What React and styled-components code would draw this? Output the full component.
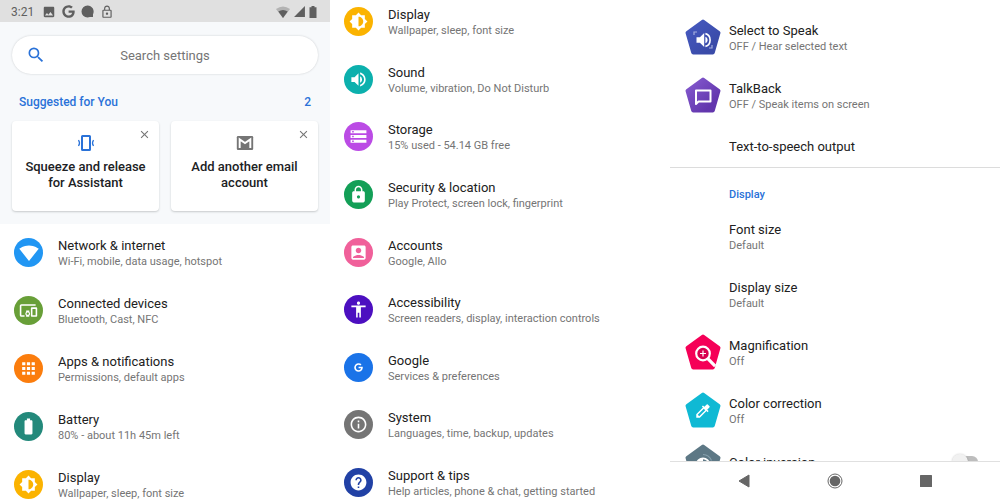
import React, { useId } from "react";
import styled, { createGlobalStyle } from "styled-components";
import {
  MdAccessibility,
  MdAccountBox,
  MdApps,
  MdBatteryFull,
  MdBrightnessMedium,
  MdClose,
  MdColorize,
  MdDevicesOther,
  MdHelp,
  MdImage,
  MdLock,
  MdOutlineInfo,
  MdOutlineLock,
  MdSearch,
  MdSignalCellular4Bar,
  MdSignalWifi4Bar,
  MdStorage,
  MdVolumeUp,
} from "react-icons/md";
import { FaGoogle } from "react-icons/fa";

const mainItems = [
  { title: "Network & internet", note: "Wi-Fi, mobile, data usage, hotspot", color: "#2196f3", icon: <MdSignalWifi4Bar size={20} /> },
  { title: "Connected devices", note: "Bluetooth, Cast, NFC", color: "#689f38", icon: <MdDevicesOther size={19} /> },
  { title: "Apps & notifications", note: "Permissions, default apps", color: "#fb7d0d", icon: <MdApps size={19} /> },
  { title: "Battery", note: "80% - about 11h 45m left", color: "#23897b", icon: <MdBatteryFull size={19} /> },
  { title: "Display", note: "Wallpaper, sleep, font size", color: "#fbb300", icon: <MdBrightnessMedium size={19} /> },
];

const moreItems = [
  mainItems[4],
  { title: "Sound", note: "Volume, vibration, Do Not Disturb", color: "#0cb0ad", icon: <MdVolumeUp size={19} /> },
  { title: "Storage", note: "15% used - 54.14 GB free", color: "#bb4be5", icon: <MdStorage size={19} /> },
  { title: "Security & location", note: "Play Protect, screen lock, fingerprint", color: "#139f57", icon: <MdLock size={19} /> },
  { title: "Accounts", note: "Google, Allo", color: "#f0609a", icon: <MdAccountBox size={19} /> },
  { title: "Accessibility", note: "Screen readers, display, interaction controls", color: "#4c0fc0", icon: <MdAccessibility size={19} /> },
  { title: "Google", note: "Services & preferences", color: "#1a73e8", icon: <FaGoogle size={9} /> },
  { title: "System", note: "Languages, time, backup, updates", color: "#757575", icon: <MdOutlineInfo size={19} /> },
  { title: "Support & tips", note: "Help articles, phone & chat, getting started", color: "#2141a5", icon: <MdHelp size={19} /> },
];

function Pentagon({ color, light = color, children }) {
  const id = useId();

  return (
    <svg width="36" height="36" viewBox="0 0 36 36" fill="none" aria-hidden="true">
      <linearGradient id={id} gradientUnits="userSpaceOnUse" x1="4" y1="6" x2="26" y2="28">
        <stop stopColor={light} />
        <stop offset="1" stopColor={color} />
      </linearGradient>
      <path
        d="M18 2.5 33.5 13.8 27.8 33.5H8.2L2.5 13.8z"
        fill={`url(#${id})`}
        stroke={`url(#${id})`}
        strokeWidth="4"
        strokeLinejoin="round"
      />
      {children}
    </svg>
  );
}

const SpeakIcon = () => (
  <Pentagon color="#3a4ba9" light="#4558be">
    <path d="M9 16v-3h3M27 26v3h-3" stroke="#a5aede" strokeWidth="1.2" />
    <path d="M11.5 18.3v5.4h3.4l4.3 4.3V14l-4.3 4.3z" fill="#fff" />
    <path d="M20.4 17.8c1.4.6 2.2 1.8 2.2 3.2s-.8 2.6-2.2 3.2z" fill="#fff" />
    <path d="M20.4 14.6c2.8.7 4.7 3.3 4.7 6.4s-1.9 5.7-4.7 6.4" stroke="#fff" strokeWidth="1.6" />
  </Pentagon>
);

const TalkBackIcon = () => (
  <Pentagon color="#6236ad" light="#8257cc">
    <path d="M11 13.5h14.5v11h-12L11 27z" stroke="#fff" strokeWidth="2" strokeLinejoin="round" />
  </Pentagon>
);

const MagnifyIcon = () => (
  <Pentagon color="#f50057">
    <circle cx="18" cy="19.5" r="6.8" fill="#d8004e" stroke="#fff" strokeWidth="2.2" />
    <path d="m22.8 24.6 7.4 7.6" stroke="#fff" strokeWidth="3.2" />
    <path d="M18 16.5v6M15 19.5h6" stroke="#fff" strokeWidth="1.2" />
  </Pentagon>
);

const CorrectionIcon = () => (
  <Pentagon color="#0fb9d4">
    <MdColorize x="9" y="10" size={18} color="#fff" />
  </Pentagon>
);

const InversionIcon = () => (
  <Pentagon color="#5d7885">
    <path d="M18 10.5a9.5 9.5 0 0 1 8.5 6" stroke="#86a0ac" strokeWidth="1.2" />
    <circle cx="18" cy="20.5" r="6.2" stroke="#fff" strokeWidth="1.8" />
    <path d="M18 14.5a6 6 0 0 0 0 12z" fill="#fff" />
  </Pentagon>
);

const SqueezeIcon = () => (
  <svg width="18" height="18" viewBox="0 0 18 18" fill="none" stroke="#2a72d8" aria-hidden="true">
    <rect x="5" y="2" width="8" height="14" rx="0.5" strokeWidth="2" />
    <path d="M1.5 6q2 3 0 6M16.5 6q-2 3 0 6" strokeWidth="1.3" />
  </svg>
);

const MailIcon = () => (
  <svg width="18" height="18" viewBox="1 1 22 22" aria-hidden="true">
    <rect x="2" y="3.5" width="20" height="17" rx="1.5" fill="#757575" />
    <path d="M5.5 18V7.5L12 12l6.500-4.500V18" fill="none" stroke="#fff" strokeWidth="2.4" />
  </svg>
);

const ChatIcon = () => (
  <svg width="13" height="13" viewBox="0 0 13 13" fill="currentColor" aria-hidden="true">
    <path d="M6.5.5a6 6 0 1 0 0 12c.9 0 1.7-.2 2.4-.5h3.1V9.2A6 6 0 0 0 6.5.5z" />
  </svg>
);

const WifiIcon = () => (
  <svg width="14" height="12" viewBox="0 0 14 12" fill="currentColor" aria-hidden="true">
    <path d="M0 3q7-5 14 0L7 12z" opacity="0.35" />
    <path d="M2.3 5.6q4.7-3.2 9.4 0L7 12z" />
  </svg>
);

const BatteryIcon = () => (
  <svg width="8" height="12" viewBox="0 0 8 12" fill="currentColor" aria-hidden="true">
    <path d="M2.5 0h3v1.2h2V12h-7V1.2h2z" />
  </svg>
);

function SettingsRow({ item }) {
  return (
    <li>
      <Row href="#">
        <Badge $color={item.color}>{item.icon}</Badge>
        <RowText>
          <RowTitle>{item.title}</RowTitle>
          <RowNote>{item.note}</RowNote>
        </RowText>
      </Row>
    </li>
  );
}

function AccessRow({ title, note, icon }) {
  return (
    <AccessLink href="#" $single={!note}>
      <IconSlot>{icon}</IconSlot>
      <RowText>
        <RowTitle>{title}</RowTitle>
        {note && <RowNote>{note}</RowNote>}
      </RowText>
    </AccessLink>
  );
}

function SuggestionCard({ icon, children }) {
  return (
    <Card>
      <CloseButton type="button" aria-label="Dismiss">
        <MdClose size={13} />
      </CloseButton>
      {icon}
      <CardTitle>{children}</CardTitle>
    </Card>
  );
}

function App() {
  return (
    <>
      <GlobalStyle />
      <Screens>
        <Screen>
          <StatusBar>
            <span>3:21</span>
            <StatusIcons $gap="6px">
              <MdImage size={14} />
              <FaGoogle size={13} />
              <ChatIcon />
              <MdOutlineLock size={14} />
            </StatusIcons>
            <StatusIcons $gap="3px" $end>
              <WifiIcon />
              <MdSignalCellular4Bar size={13} />
              <BatteryIcon />
            </StatusIcons>
          </StatusBar>
          <Top>
            <SearchBox>
              <MdSearch size={20} />
              <SearchInput type="text" placeholder="Search settings" aria-label="Search settings" />
            </SearchBox>
            <SuggestedHeader>
              <span>Suggested for You</span>
              <span>2</span>
            </SuggestedHeader>
            <Cards>
              <SuggestionCard icon={<SqueezeIcon />}>Squeeze and release for Assistant</SuggestionCard>
              <SuggestionCard icon={<MailIcon />}>Add another email account</SuggestionCard>
            </Cards>
          </Top>
          <List>
            {mainItems.map((item) => (
              <SettingsRow key={item.title} item={item} />
            ))}
          </List>
        </Screen>

        <Screen>
          <SpreadList>
            {moreItems.map((item) => (
              <SettingsRow key={item.title} item={item} />
            ))}
          </SpreadList>
        </Screen>

        <Screen>
          <Scroller>
            <AccessRow title="Select to Speak" note="OFF / Hear selected text" icon={<SpeakIcon />} />
            <AccessRow title="TalkBack" note="OFF / Speak items on screen" icon={<TalkBackIcon />} />
            <AccessRow title="Text-to-speech output" />
            <SectionTitle>Display</SectionTitle>
            <AccessRow title="Font size" note="Default" />
            <AccessRow title="Display size" note="Default" />
            <AccessRow title="Magnification" note="Off" icon={<MagnifyIcon />} />
            <AccessRow title="Color correction" note="Off" icon={<CorrectionIcon />} />
            <ToggleRow>
              <IconSlot>
                <InversionIcon />
              </IconSlot>
              <RowText>
                <RowTitle as="label" htmlFor="inversion">
                  Color inversion
                </RowTitle>
              </RowText>
              <Toggle type="checkbox" id="inversion" />
            </ToggleRow>
          </Scroller>
          <NavBar>
            <NavButton type="button" aria-label="Back">
              <svg width="14" height="14" viewBox="0 0 14 14">
                <path d="M2 7 12 1v12z" fill="#666" stroke="#666" strokeLinejoin="round" />
              </svg>
            </NavButton>
            <NavButton type="button" aria-label="Home">
              <svg width="16" height="16" viewBox="0 0 16 16">
                <circle cx="8" cy="8" r="7" fill="none" stroke="#666" />
                <circle cx="8" cy="8" r="5.3" fill="#666" />
              </svg>
            </NavButton>
            <NavButton type="button" aria-label="Recent apps">
              <svg width="12" height="12" viewBox="0 0 12 12">
                <rect width="12" height="12" rx="0.5" fill="#666" />
              </svg>
            </NavButton>
          </NavBar>
        </Screen>
      </Screens>
    </>
  );
}

const GlobalStyle = createGlobalStyle`
  * {
    box-sizing: border-box;
  }

  body {
    margin: 0;
    background: #fff;
    font-family: Roboto, "Liberation Sans", sans-serif;
  }

  svg {
    display: block;
    flex-shrink: 0;
  }
`;

const Screens = styled.main`
  display: grid;
  grid-template-columns: 33fr 34fr 33fr;
  height: 100vh;
  overflow: hidden;
`;

const Screen = styled.section`
  display: flex;
  flex-direction: column;
  min-width: 0;
  min-height: 0;
`;

const StatusBar = styled.div`
  display: flex;
  align-items: center;
  gap: 8px;
  height: 22px;
  flex-shrink: 0;
  padding: 1px 13px 0 11px;
  background: #e0e0e0;
  color: #5f5f5f;
  font-size: 12px;
  line-height: 16px;
`;

const StatusIcons = styled.div`
  display: flex;
  align-items: center;
  gap: ${({ $gap }) => $gap};
  margin-left: ${({ $end }) => ($end ? "auto" : "0")};
`;

const Top = styled.div`
  padding: 14px 12px 13px;
  background: #f7f9fb;
`;

const SearchBox = styled.div`
  display: flex;
  align-items: center;
  height: 38px;
  padding: 0 34px 0 14px;
  border-radius: 19px;
  background: #fff;
  box-shadow: 0 0 2px rgba(60, 64, 67, 0.25);
  color: #2a72d8;
`;

const SearchInput = styled.input`
  flex: 1;
  min-width: 0;
  border: none;
  outline: none;
  background: transparent;
  font-family: inherit;
  font-size: 13px;
  text-align: center;

  &::placeholder {
    color: #757575;
    opacity: 1;
  }
`;

const SuggestedHeader = styled.div`
  display: flex;
  justify-content: space-between;
  padding: 20px 7px 11px;
  color: #2a72d8;
  font-size: 12px;
  font-weight: 500;
  line-height: 16px;
`;

const Cards = styled.div`
  display: grid;
  grid-template-columns: 1fr 1fr;
  gap: 12px;
`;

const Card = styled.article`
  position: relative;
  display: flex;
  flex-direction: column;
  align-items: center;
  gap: 7px;
  min-height: 90px;
  padding: 13px 8px;
  border-radius: 4px;
  background: #fff;
  box-shadow: 0 1px 2px rgba(60, 64, 67, 0.25);
`;

const CloseButton = styled.button`
  position: absolute;
  top: 7px;
  right: 8px;
  padding: 0;
  border: none;
  background: none;
  color: #757575;
  cursor: pointer;
`;

const CardTitle = styled.h2`
  max-width: 124px;
  margin: 0;
  color: #202124;
  font-size: 13px;
  font-weight: 500;
  line-height: 16px;
  text-align: center;
`;

const List = styled.ul`
  display: flex;
  flex-direction: column;
  gap: 23px;
  margin: 0;
  padding: 11px 0;
  list-style: none;
`;

const SpreadList = styled(List)`
  flex: 1;
  justify-content: space-between;
  gap: 0;
  padding: 4px 0 0;
`;

const Row = styled.a`
  display: flex;
  align-items: center;
  gap: 15px;
  padding: 0 14px;
  text-decoration: none;
`;

const Badge = styled.span`
  display: flex;
  align-items: center;
  justify-content: center;
  flex-shrink: 0;
  width: 29px;
  height: 29px;
  border-radius: 50%;
  background: ${({ $color }) => $color};
  color: #fff;
`;

const RowText = styled.span`
  display: flex;
  flex-direction: column;
  min-width: 0;
  padding-top: 3px;
`;

const RowTitle = styled.span`
  color: #212121;
  font-size: 13px;
  line-height: 16px;
  white-space: nowrap;
`;

const RowNote = styled.span`
  color: #757575;
  font-size: 11px;
  line-height: 16px;
  white-space: nowrap;
`;

const Scroller = styled.div`
  flex: 1;
  min-height: 0;
  padding-top: 8px;
  overflow: hidden;
`;

const AccessLink = styled.a`
  display: flex;
  align-items: center;
  gap: 8px;
  height: ${({ $single }) => ($single ? "43px" : "58px")};
  padding: 0 15px;
  text-decoration: none;
`;

const IconSlot = styled.span`
  flex-shrink: 0;
  width: 36px;
`;

const SectionTitle = styled.h2`
  margin: 0;
  padding: 19px 15px 4px 59px;
  border-top: 1px solid #dcdcdc;
  color: #2a72d8;
  font-size: 11px;
  font-weight: 500;
  line-height: 16px;
`;

const ToggleRow = styled.div`
  display: flex;
  align-items: center;
  gap: 8px;
  height: 45px;
  padding: 0 22px 0 15px;
`;

const Toggle = styled.input`
  position: relative;
  appearance: none;
  width: 24px;
  height: 12px;
  margin: 0 0 0 auto;
  border-radius: 6px;
  background: #bdbdbd;
  cursor: pointer;

  &::before {
    content: "";
    position: absolute;
    top: -2px;
    left: -2px;
    width: 16px;
    height: 16px;
    border-radius: 50%;
    background: #f1f1f1;
    box-shadow: 0 0 2px rgba(0, 0, 0, 0.2);
  }
`;

const NavBar = styled.nav`
  display: flex;
  align-items: center;
  justify-content: center;
  gap: 51px;
  height: 39px;
  flex-shrink: 0;
  border-top: 1px solid #e0e0e0;
  background: #fff;
`;

const NavButton = styled.button`
  display: flex;
  align-items: center;
  justify-content: center;
  width: 40px;
  height: 24px;
  padding: 0;
  border: none;
  background: none;
  cursor: pointer;
`;

export default App;
